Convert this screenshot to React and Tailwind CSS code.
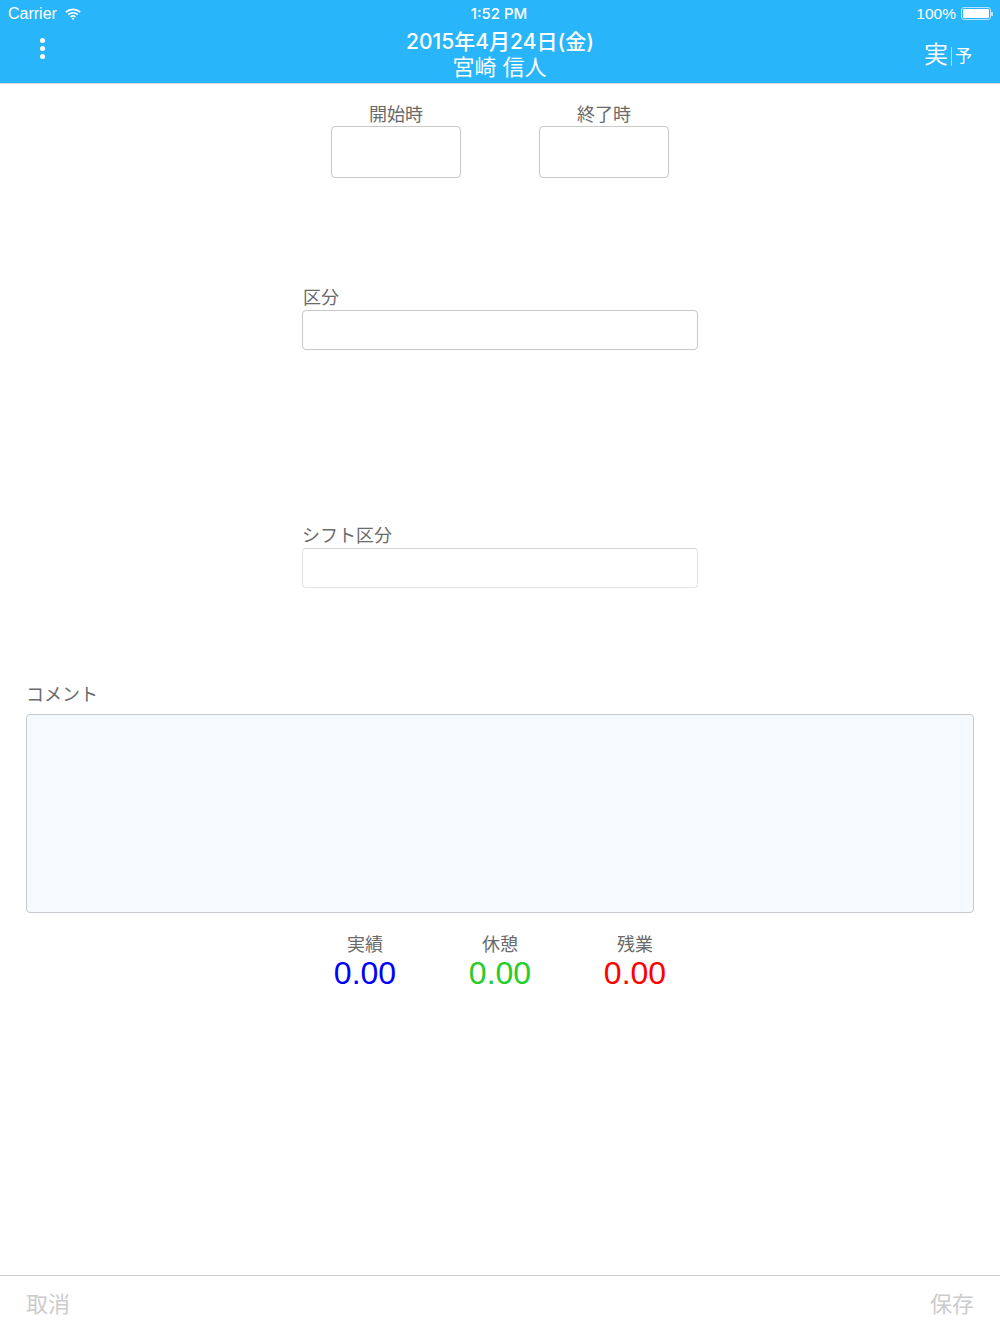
const Label = ({ children }) => (
  <div className="text-[18px] leading-[22px] text-[#6a6a6a] text-center">{children}</div>
);
const Stat = ({ label, color }) => (
  <div className="w-[135px] flex flex-col items-center">
    <div className="text-[18px] leading-[22px] text-[#6a6a6a] mt-px">{label}</div>
    <div className={"text-[32px] leading-[35px] " + color}>0.00</div>
  </div>
);
const Wifi = () => (
  <svg width="16" height="12" viewBox="0 0 16 12" fill="none" stroke="white" strokeWidth="1.6" strokeLinecap="butt">
    <path d="M0.8 4.2C4.8 0.4 11.2 0.4 15.2 4.2" />
    <path d="M3.2 6.6C5.9 4.1 10.1 4.1 12.8 6.6" />
    <path d="M5.5 8.9C7 7.6 9 7.6 10.5 8.9" />
    <path d="M8 12L6.6 10.4C7.4 9.8 8.6 9.8 9.4 10.4Z" fill="white" stroke="none" />
  </svg>
);
export default function App() {
  return (
    <div className="w-[1000px] h-[1333px] bg-white flex flex-col overflow-hidden font-['Liberation_Sans','Noto_Sans_CJK_JP',sans-serif]">
      <header className="h-[84px] shrink-0 bg-[#29b5f9] border-b border-[#d8d8d8] text-white flex flex-col">
        <div className="h-[27px] shrink-0 grid grid-cols-3 items-center pl-2 pr-[7px] text-[16px]">
          <div className="flex items-center gap-[8px]"><span>Carrier</span><Wifi /></div>
          <div className="text-center font-medium text-[15px] -ml-[3px] pt-[2px] font-['Inter','Noto_Sans_CJK_JP',sans-serif]">1:52 PM</div>
          <div className="flex items-center justify-end gap-[5px]">
            <span className="text-[15.5px]">100%</span>
            <div className="flex items-center">
              <div className="w-[30px] h-[13px] rounded-[3px] border border-[#b5e5fd] p-px"><div className="w-full h-full bg-white rounded-[1px]" /></div>
              <div className="w-[2px] h-[4px] bg-[#b5e5fd]" />
            </div>
          </div>
        </div>
        <div className="flex-1 flex items-start">
          <div className="w-[200px] pl-[40px] pt-[11px] flex flex-col gap-[3px]">
            <div className="w-[5px] h-[5px] rounded-full bg-white" />
            <div className="w-[5px] h-[5px] rounded-full bg-white" />
            <div className="w-[5px] h-[5px] rounded-full bg-white" />
          </div>
          <div className="flex-1 text-center pt-[2px]">
            <div className="text-[21px] leading-[26px] font-medium font-['Inter','Noto_Sans_CJK_JP',sans-serif]">2015年4月24日(金)</div>
            <div className="text-[22px] leading-[25px] -ml-px">宮崎 信人</div>
          </div>
          <div className="w-[200px] pr-[28px] pt-[12px] flex justify-end items-center h-[44px]">
            <span className="text-[24px] leading-[28px]">実</span>
            <span className="w-px h-[19px] bg-[#a5dffc] ml-[3px] mr-[3px] mt-[3px]" />
            <span className="text-[17px] leading-[20px] mt-[3px]">予</span>
          </div>
        </div>
      </header>
      <main className="flex-1 flex flex-col items-center">
        <div className="flex gap-[78px] mt-[20px]">
          <div className="w-[130px]">
            <Label>開始時</Label>
            <div className="h-[52px] border border-[#c8c8c8] rounded-[4px]" />
          </div>
          <div className="w-[130px]">
            <Label>終了時</Label>
            <div className="h-[52px] border border-[#c8c8c8] rounded-[4px]" />
          </div>
        </div>
        <div className="w-[396px] mt-[109px]">
          <Label><div className="text-left pl-px">区分</div></Label>
          <div className="h-[40px] mt-px border border-[#c8c8c8] rounded-[4px]" />
        </div>
        <div className="w-[396px] mt-[175px]">
          <Label><div className="text-left">シフト区分</div></Label>
          <div className="h-[40px] mt-px border border-[#e2e2e2] border-t-[#d4d4d4] rounded-[4px]" />
        </div>
        <div className="w-[948px] mt-[95px]">
          <div className="text-[18px] leading-[24px] text-[#6a6a6a]">コメント</div>
          <div className="h-[199px] mt-[7px] bg-[#f5fafe] border border-[#c6cbd0] rounded-[4px]" />
        </div>
        <div className="flex mt-[20px]">
          <Stat label="実績" color="text-[#0000ff]" />
          <Stat label="休憩" color="text-[#28cc28]" />
          <Stat label="残業" color="text-[#ff0000]" />
        </div>
      </main>
      <footer className="h-[58px] shrink-0 border-t border-[#cfcfcf] flex justify-between items-center px-[26px] text-[22px] text-[#cccccc]">
        <span>取消</span>
        <span>保存</span>
      </footer>
    </div>
  );
}
